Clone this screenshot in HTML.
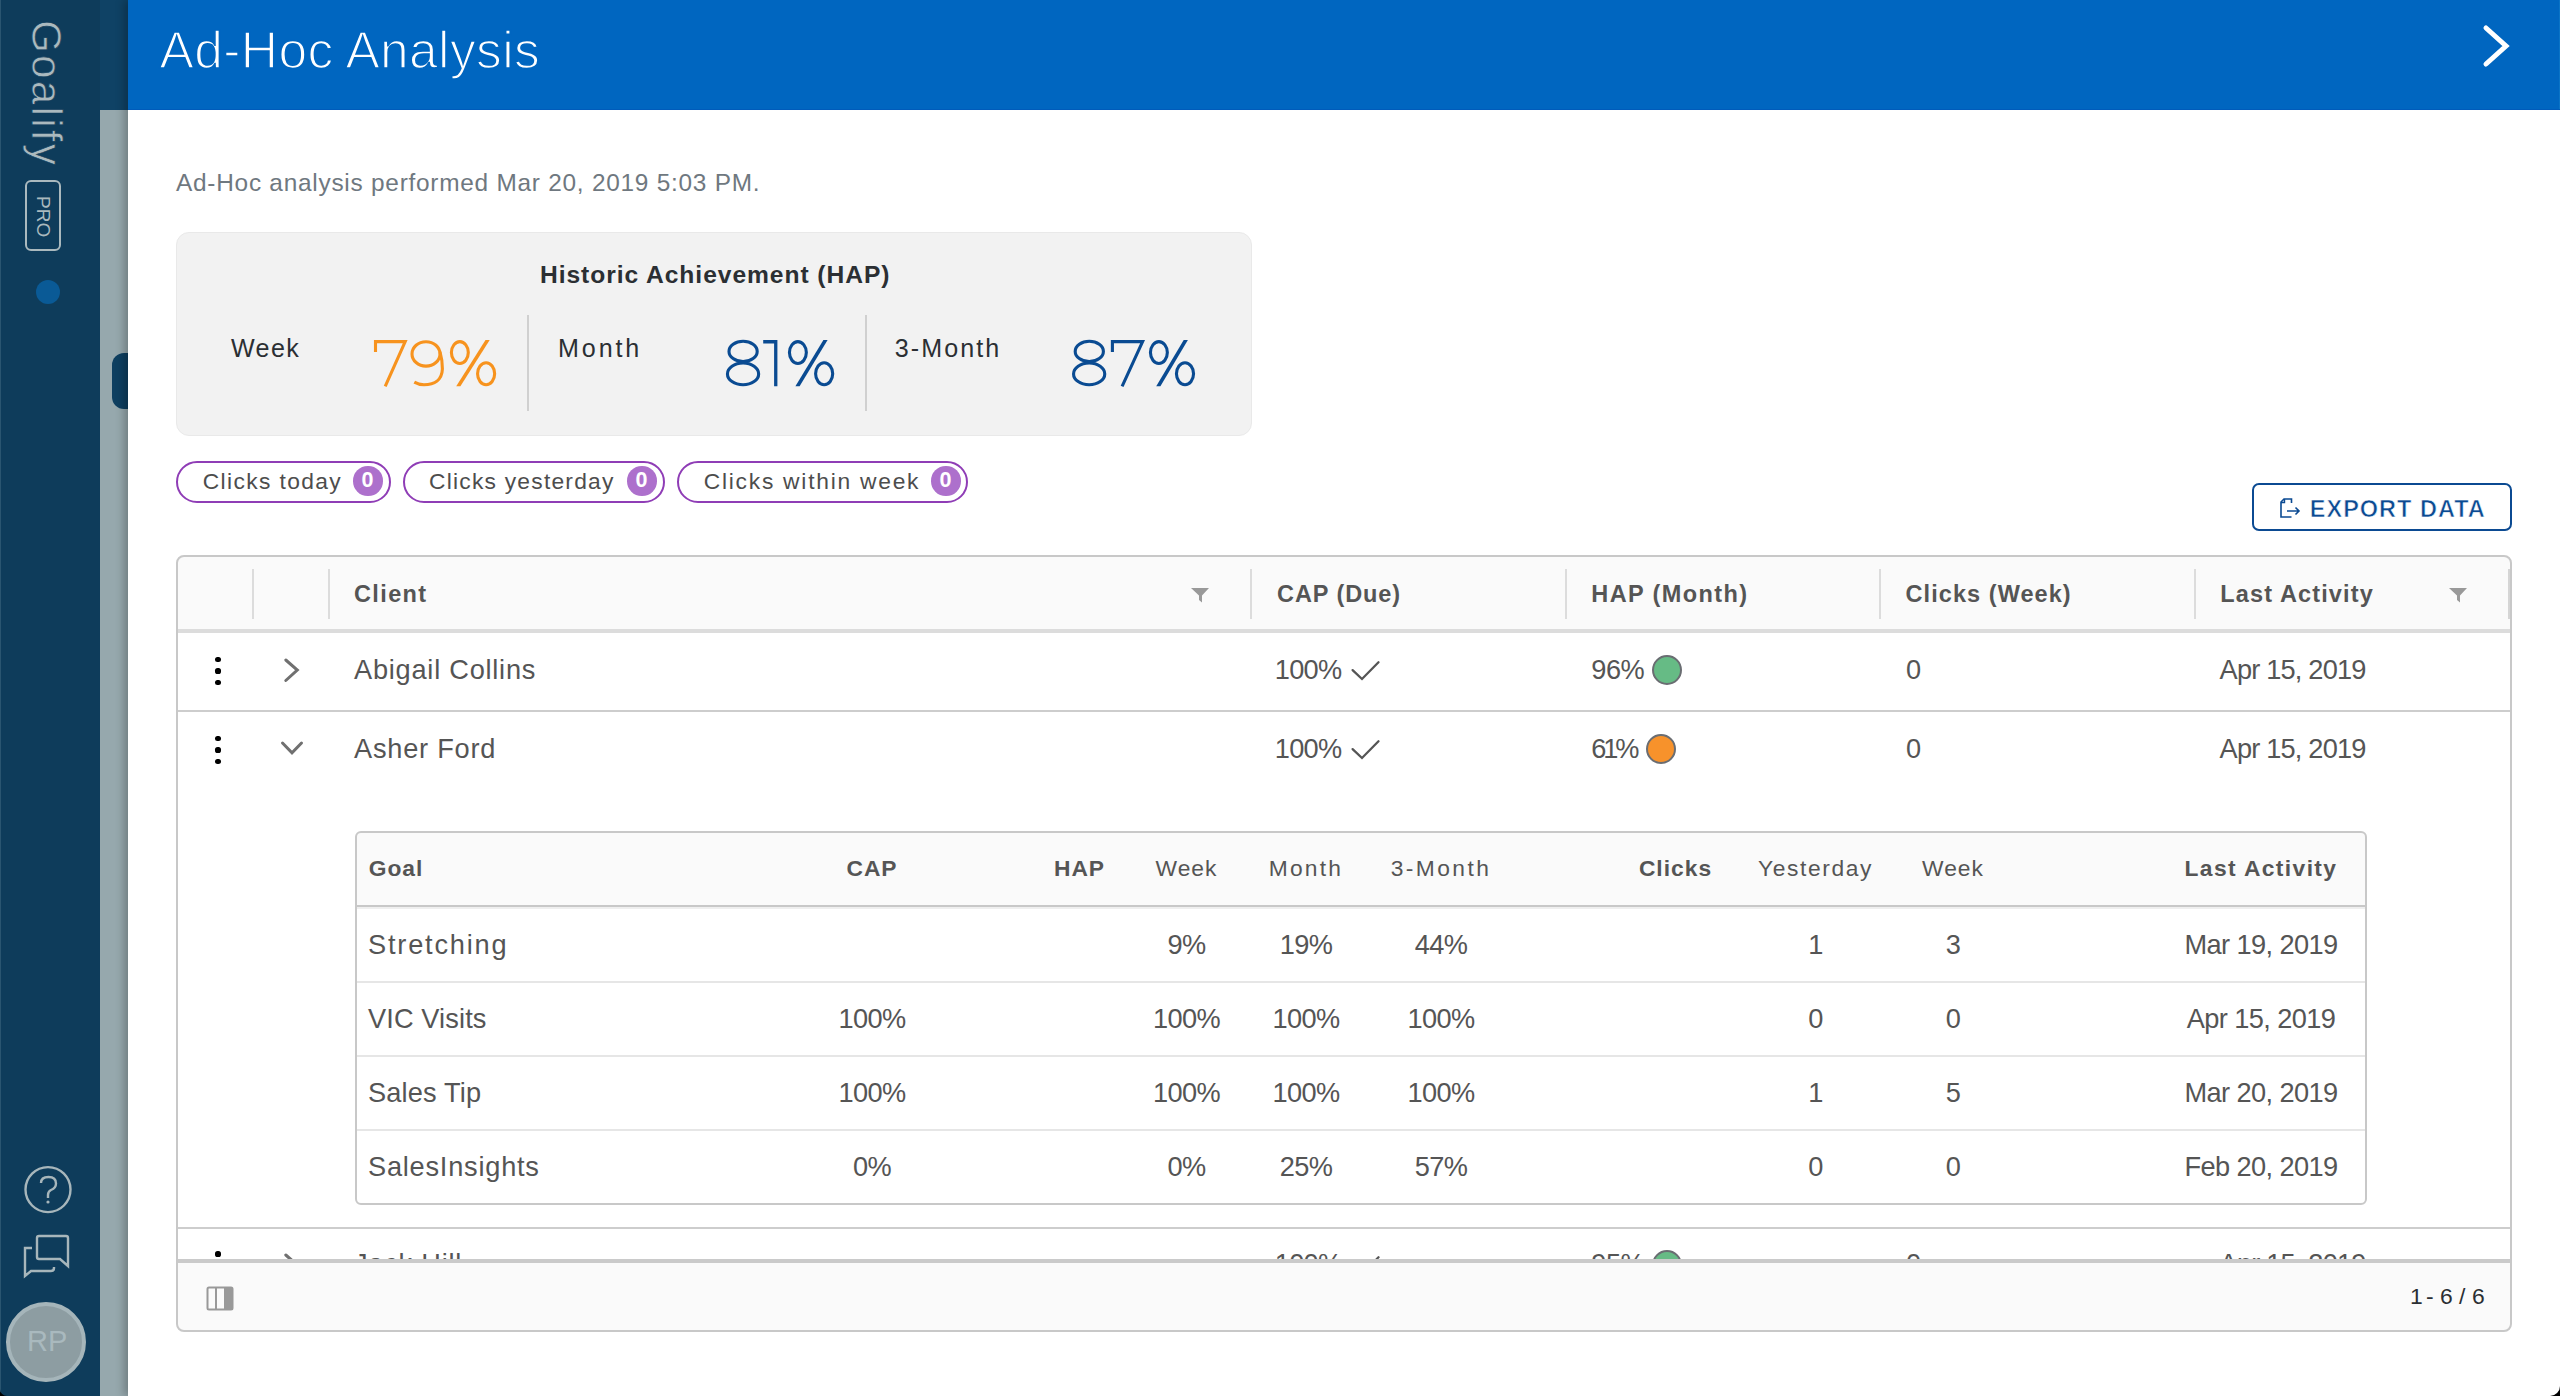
<!DOCTYPE html>
<html><head><meta charset="utf-8">
<style>
*{box-sizing:border-box;margin:0;padding:0}
html,body{width:2560px;height:1396px;overflow:hidden;background:#000}
body{position:relative;font-family:"Liberation Sans",sans-serif}
.t{position:absolute;line-height:1;white-space:nowrap;font-family:"Liberation Sans",sans-serif}
.abs{position:absolute}
#side{position:absolute;left:0;top:0;width:100px;height:1396px;background:#0e3c5b;border-bottom-left-radius:7px;overflow:hidden}
#under{position:absolute;left:100px;top:0;width:40px;height:1396px;background:#96a8ad}
#drawer{position:absolute;left:128px;top:0;width:2432px;height:1396px;background:#fff;border-bottom-right-radius:10px;box-shadow:-4px 0 8px rgba(0,0,0,.25)}
#hdr{position:absolute;left:0;top:0;width:2432px;height:110px;background:#0066c0}
</style></head><body>

<div id="under">
<div class="abs" style="left:0.00px;top:0.00px;width:40.00px;height:110.00px;background:#0f4265"></div>
<div class="abs" style="left:12.00px;top:353.00px;width:40.00px;height:56.00px;background:#0e3f60;border-radius:12px"></div>
</div>
<div id="side">
<div class="abs" style="left:0.00px;top:0.00px;width:1.00px;height:1396.00px;background:#2a5570"></div>
<div class="t" style="left:66.5px;top:20.2px;font-size:42.3px;letter-spacing:2.2px;color:#aab9be;transform:rotate(90deg);transform-origin:0 0;-webkit-text-stroke:0.7px #0e3c5b">Goalify</div>
<div class="abs" style="left:25.00px;top:180.00px;width:36.00px;height:71.00px;border:2px solid #aab9be;border-radius:6px"></div>
<div class="t" style="left:53px;top:196px;font-size:19px;color:#aab9be;transform:rotate(90deg);transform-origin:0 0;letter-spacing:0px">PRO</div>
<div class="abs" style="left:36.00px;top:280.00px;width:24.00px;height:24.00px;border-radius:50%;background:#0a5a96"></div>
<svg class="abs" style="left:0;top:1150px" width="100" height="246" viewBox="0 0 100 246">
    <circle cx="48" cy="39.6" r="22.5" fill="none" stroke="#a7b6bb" stroke-width="2.4"/>
    <path d="M41 33 Q41 27 48.5 27 Q56 27 56 33.5 Q56 38 51 40 Q48 41.5 48 45 L48 48" fill="none" stroke="#a7b6bb" stroke-width="2.4"/>
    <circle cx="48" cy="52" r="1.6" fill="#a7b6bb"/>
    <path d="M32 98 L25 98 L25 126 L31 121 L51 121 Q54 121 54 118 L54 117" fill="none" stroke="#a7b6bb" stroke-width="2.4"/>
    <path d="M39 86 L66 86 Q68 86 68 88 L68 116 L60 109 L39 109 Q37 109 37 107 L37 88 Q37 86 39 86 Z" fill="none" stroke="#a7b6bb" stroke-width="2.4"/>
    <circle cx="46" cy="192" r="38" fill="#8d9da2" stroke="#a5b5ba" stroke-width="4"/>
  </svg>
<div class="t" style="left:27px;top:1327px;font-size:29px;color:#a9b9be">RP</div>
</div>
<div id="drawer">
<div id="hdr">
<div class="abs" style="left:0.00px;top:109.00px;width:2432.00px;height:1.00px;background:#005bba"></div>
<div class="abs" style="left:2431.00px;top:0.00px;width:1.00px;height:109.00px;background:#0b74c6"></div>
<div class="t" style="left:31.60px;top:25.00px;font-size:51.5px;color:#fff;letter-spacing:0.37px;-webkit-text-stroke:1.6px #0066c0;">Ad-Hoc Analysis</div>
<svg class="abs" style="left:2340px;top:0" width="60" height="110"><polyline points="18,28 38,46 18,64" fill="none" stroke="#fff" stroke-width="5" stroke-linecap="round" stroke-linejoin="miter"/></svg>
</div>
<div class="t" style="left:48.00px;top:170.90px;font-size:24.4px;color:#6f7880;letter-spacing:0.75px;">Ad-Hoc analysis performed Mar 20, 2019 5:03 PM.</div>
<div class="abs" style="left:48.00px;top:232.00px;width:1076.00px;height:204.00px;background:#f2f2f2;border:1px solid #e9e9e9;border-radius:13px"></div>
<div class="t" style="left:412.00px;top:263.00px;font-size:24.6px;color:#2b2f33;letter-spacing:0.95px;font-weight:bold;">Historic Achievement (HAP)</div>
<div class="t" style="left:103.00px;top:335.50px;font-size:25.1px;color:#2b2f33;letter-spacing:1.36px;">Week</div>
<svg class="abs" style="left:-128px;top:0" width="1400" height="450" viewBox="0 0 1400 450"><g fill="none" stroke="#f7931e" stroke-width="3.1"><polyline points="375.5,352 375.5,341.65 405.2,341.65 385.2,386.3" stroke-linejoin="miter"/><ellipse cx="426" cy="353.9" rx="14" ry="12.2"/><path d="M440 352 C441.8 358 442.4 363 442.4 369 C442 380 434.5 384.7 424 384.7 C420 384.7 417 383.8 414.3 382.2"/><ellipse cx="459.85" cy="352.55" rx="8.45" ry="10.9"/><ellipse cx="486.1" cy="373.75" rx="8.55" ry="11"/></g><g fill="#f7931e"><polygon points="485.50,340.1 489.70,340.1 460.40,386.3 456.20,386.3"/></g><g fill="none" stroke="#0a4b92" stroke-width="3.1"><ellipse cx="743.1" cy="351.4" rx="14.1" ry="10.1"/><ellipse cx="743.05" cy="373.9" rx="15.6" ry="10.85"/><polyline points="763.2,341.75 775.75,341.75 775.75,386.3" stroke-width="3.3"/><ellipse cx="797.9" cy="352.55" rx="8.45" ry="10.9"/><ellipse cx="824.15" cy="373.75" rx="8.55" ry="11"/><ellipse cx="1089.3" cy="351.4" rx="14.1" ry="10.1"/><ellipse cx="1089.15" cy="373.9" rx="15.6" ry="10.85"/><polyline points="1112.4,352 1112.4,341.65 1142.6,341.65 1122.1,386.3" stroke-linejoin="miter"/><ellipse cx="1158.9" cy="352.55" rx="8.45" ry="10.9"/><ellipse cx="1185" cy="373.75" rx="8.55" ry="11"/></g><g fill="#0a4b92"><polygon points="823.40,340.1 827.60,340.1 799.60,386.3 795.40,386.3"/><polygon points="1183.70,340.1 1187.90,340.1 1160.40,386.3 1156.20,386.3"/></g></svg>
<div class="abs" style="left:399.00px;top:315.00px;width:2.00px;height:96.00px;background:#d0d0d0"></div>
<div class="t" style="left:430.00px;top:335.50px;font-size:25.1px;color:#2b2f33;letter-spacing:2.89px;">Month</div>
<div class="abs" style="left:737.00px;top:315.00px;width:2.00px;height:96.00px;background:#d0d0d0"></div>
<div class="t" style="left:766.80px;top:335.50px;font-size:25.1px;color:#2b2f33;letter-spacing:2.07px;">3-Month</div>
<div class="abs" style="left:48.00px;top:461.00px;width:215.00px;height:42.00px;border:2px solid #8f3db6;border-radius:21px"></div>
<div class="t" style="left:74.75px;top:470.30px;font-size:22.8px;color:#4d4d4d;letter-spacing:1.37px;">Clicks today</div>
<div class="abs" style="left:225.00px;top:466.00px;width:29.50px;height:29.50px;border-radius:50%;background:#ad70cc"></div>
<div class="t" style="left:233.60px;top:469.60px;font-size:21.5px;color:#fff;letter-spacing:0px;font-weight:bold;">0</div>
<div class="abs" style="left:275.00px;top:461.00px;width:262.00px;height:42.00px;border:2px solid #8f3db6;border-radius:21px"></div>
<div class="t" style="left:301.00px;top:470.30px;font-size:22.8px;color:#4d4d4d;letter-spacing:1.23px;">Clicks yesterday</div>
<div class="abs" style="left:499.00px;top:466.00px;width:29.50px;height:29.50px;border-radius:50%;background:#ad70cc"></div>
<div class="t" style="left:507.60px;top:469.60px;font-size:21.5px;color:#fff;letter-spacing:0px;font-weight:bold;">0</div>
<div class="abs" style="left:549.00px;top:461.00px;width:291.00px;height:42.00px;border:2px solid #8f3db6;border-radius:21px"></div>
<div class="t" style="left:575.75px;top:470.30px;font-size:22.8px;color:#4d4d4d;letter-spacing:1.75px;">Clicks within week</div>
<div class="abs" style="left:803.00px;top:466.00px;width:29.50px;height:29.50px;border-radius:50%;background:#ad70cc"></div>
<div class="t" style="left:811.60px;top:469.60px;font-size:21.5px;color:#fff;letter-spacing:0px;font-weight:bold;">0</div>
<div class="abs" style="left:2124.00px;top:483.00px;width:260.00px;height:48.00px;border:2.5px solid #0b4a92;border-radius:7px"></div>
<svg class="abs" style="left:2150px;top:495px" width="30" height="26" viewBox="0 0 30 26">
    <path d="M13.5 8 L13.5 4 L6 4 L3 7 L3 22 L13.5 22" fill="none" stroke="#0b4a92" stroke-width="1.6"/>
    <path d="M3 7.5 L6.5 7.5 L6.5 4" fill="none" stroke="#0b4a92" stroke-width="1.4"/>
    <path d="M9 16 L21 16 M17.5 12.5 L21 16 L17.5 19.5" fill="none" stroke="#0b4a92" stroke-width="1.6"/>
  </svg>
<div class="t" style="left:2181.80px;top:497.80px;font-size:23.5px;color:#0b4a92;letter-spacing:1.0px;font-weight:bold;-webkit-text-stroke:0.6px #fff;">EXPORT DATA</div>
<div class="abs" style="left:48px;top:555px;width:2336px;height:777px;border-radius:8px;overflow:hidden;background:#fff">
<div class="abs" style="left:0.00px;top:0.00px;width:2336.00px;height:74.00px;background:#fafafa"></div>
<div class="abs" style="left:0.00px;top:74.00px;width:2336.00px;height:4.00px;background:#dcdcdc"></div>
<div class="abs" style="left:76.00px;top:14.00px;width:2.00px;height:50.00px;background:#dcdcdc"></div>
<div class="abs" style="left:152.00px;top:14.00px;width:2.00px;height:50.00px;background:#dcdcdc"></div>
<div class="abs" style="left:1074.00px;top:14.00px;width:2.00px;height:50.00px;background:#dcdcdc"></div>
<div class="abs" style="left:1389.00px;top:14.00px;width:2.00px;height:50.00px;background:#dcdcdc"></div>
<div class="abs" style="left:1703.00px;top:14.00px;width:2.00px;height:50.00px;background:#dcdcdc"></div>
<div class="abs" style="left:2018.00px;top:14.00px;width:2.00px;height:50.00px;background:#dcdcdc"></div>
<div class="abs" style="left:2332.00px;top:14.00px;width:3.00px;height:50.00px;background:#d5d5d5"></div>
<div class="t" style="left:178.00px;top:27.74px;font-size:23.5px;color:#555;letter-spacing:1.38px;font-weight:bold;">Client</div>
<div class="t" style="left:1101.00px;top:27.74px;font-size:23.5px;color:#555;letter-spacing:0.92px;font-weight:bold;">CAP (Due)</div>
<div class="t" style="left:1415.30px;top:27.74px;font-size:23.5px;color:#555;letter-spacing:1.4px;font-weight:bold;">HAP (Month)</div>
<div class="t" style="left:1729.60px;top:27.74px;font-size:23.5px;color:#555;letter-spacing:1.06px;font-weight:bold;">Clicks (Week)</div>
<div class="t" style="left:2044.30px;top:27.74px;font-size:23.5px;color:#555;letter-spacing:1.13px;font-weight:bold;">Last Activity</div>
<svg class="abs" style="left:1015.0px;top:32.5px" width="19" height="15" viewBox="0 0 19 15"><path d="M0 0 L18 0 L11 7.5 L11 14.5 L8 12 L8 7.5 Z" fill="#999"/></svg>
<svg class="abs" style="left:2273.0px;top:33.0px" width="19" height="15" viewBox="0 0 19 15"><path d="M0 0 L18 0 L11 7.5 L11 14.5 L8 12 L8 7.5 Z" fill="#999"/></svg>
<div class="abs" style="left:39.40px;top:101.80px;width:5.20px;height:5.20px;border-radius:50%;background:#000"></div>
<div class="abs" style="left:39.40px;top:113.40px;width:5.20px;height:5.20px;border-radius:50%;background:#000"></div>
<div class="abs" style="left:39.40px;top:125.20px;width:5.20px;height:5.20px;border-radius:50%;background:#000"></div>
<svg class="abs" style="left:104px;top:100px" width="24" height="30"><polyline points="5.8,5 17.3,15 5.8,25.5" fill="none" stroke="#707070" stroke-width="3" stroke-linecap="round"/></svg>
<div class="t" style="left:178.00px;top:100.65px;font-size:27.2px;color:#555;letter-spacing:0.76px;">Abigail Collins</div>
<div class="t" style="left:1098.80px;top:100.65px;font-size:27.2px;color:#555;letter-spacing:-0.75px;">100%</div>
<svg class="abs" style="left:1174px;top:103px" width="32" height="24"><polyline points="2.6,12.1 12,21 28.5,4.3" fill="none" stroke="#555" stroke-width="2.3" stroke-linecap="round"/></svg>
<div class="t" style="left:1415.30px;top:100.65px;font-size:27.2px;color:#555;letter-spacing:-0.5px;">96%</div>
<div class="abs" style="left:1476.00px;top:100.00px;width:30.00px;height:30.00px;border-radius:50%;background:#66bb85;border:2px solid #6a6d72"></div>
<div class="t" style="left:1730.00px;top:100.65px;font-size:27.2px;color:#555;letter-spacing:0px;">0</div>
<div class="t" style="left:2043.60px;top:100.65px;font-size:27.2px;color:#555;letter-spacing:-0.81px;">Apr 15, 2019</div>
<div class="abs" style="left:0.00px;top:155.00px;width:2336.00px;height:2.00px;background:#cdcdcd"></div>
<div class="abs" style="left:39.40px;top:180.80px;width:5.20px;height:5.20px;border-radius:50%;background:#000"></div>
<div class="abs" style="left:39.40px;top:192.40px;width:5.20px;height:5.20px;border-radius:50%;background:#000"></div>
<div class="abs" style="left:39.40px;top:204.20px;width:5.20px;height:5.20px;border-radius:50%;background:#000"></div>
<svg class="abs" style="left:100px;top:183px" width="32" height="24"><polyline points="6.5,5 16,14.8 25.5,5" fill="none" stroke="#707070" stroke-width="3" stroke-linecap="round"/></svg>
<div class="t" style="left:178.00px;top:179.65px;font-size:27.2px;color:#555;letter-spacing:0.76px;">Asher Ford</div>
<div class="t" style="left:1098.80px;top:179.65px;font-size:27.2px;color:#555;letter-spacing:-0.75px;">100%</div>
<svg class="abs" style="left:1174px;top:182px" width="32" height="24"><polyline points="2.6,12.1 12,21 28.5,4.3" fill="none" stroke="#555" stroke-width="2.3" stroke-linecap="round"/></svg>
<div class="t" style="left:1415.30px;top:179.65px;font-size:27.2px;color:#555;letter-spacing:-3.2px;">61%</div>
<div class="abs" style="left:1470.00px;top:179.00px;width:30.00px;height:30.00px;border-radius:50%;background:#f7922b;border:2px solid #6a6d72"></div>
<div class="t" style="left:1730.00px;top:179.65px;font-size:27.2px;color:#555;letter-spacing:0px;">0</div>
<div class="t" style="left:2043.60px;top:179.65px;font-size:27.2px;color:#555;letter-spacing:-0.81px;">Apr 15, 2019</div>
<div class="abs" style="left:179px;top:276px;width:2012px;height:374px;border-radius:6px;overflow:hidden;background:#fff">
<div class="abs" style="left:0.00px;top:0.00px;width:2012.00px;height:74.00px;background:#fafafa"></div>
<div class="abs" style="left:0.00px;top:74.00px;width:2012.00px;height:2.00px;background:#c8c8c8"></div>
<div class="abs" style="left:0.00px;top:76.00px;width:2012.00px;height:2.00px;background:#efefef"></div>
<div class="abs" style="left:0.00px;top:150.00px;width:2012.00px;height:2.00px;background:#e6e6e6"></div>
<div class="abs" style="left:0.00px;top:224.00px;width:2012.00px;height:2.00px;background:#e6e6e6"></div>
<div class="abs" style="left:0.00px;top:298.00px;width:2012.00px;height:2.00px;background:#e6e6e6"></div>
<div class="t" style="left:13.70px;top:26.35px;font-size:22.8px;color:#555;font-weight:bold;letter-spacing:1px">Goal</div>
<div class="t" style="left:317.00px;width:400px;text-align:center;top:26.35px;font-size:22.8px;color:#555;letter-spacing:1.0px;font-weight:bold;">CAP</div>
<div class="t" style="left:524.50px;width:400px;text-align:center;top:26.35px;font-size:22.8px;color:#555;letter-spacing:1.0px;font-weight:bold;">HAP</div>
<div class="t" style="left:631.50px;width:400px;text-align:center;top:26.35px;font-size:22.8px;color:#555;letter-spacing:1.0px;">Week</div>
<div class="t" style="left:751.00px;width:400px;text-align:center;top:26.35px;font-size:22.8px;color:#555;letter-spacing:2.25px;">Month</div>
<div class="t" style="left:886.00px;width:400px;text-align:center;top:26.35px;font-size:22.8px;color:#555;letter-spacing:2.43px;">3-Month</div>
<div class="t" style="left:1120.50px;width:400px;text-align:center;top:26.35px;font-size:22.8px;color:#555;letter-spacing:1.0px;font-weight:bold;">Clicks</div>
<div class="t" style="left:1260.50px;width:400px;text-align:center;top:26.35px;font-size:22.8px;color:#555;letter-spacing:1.6px;">Yesterday</div>
<div class="t" style="left:1398.00px;width:400px;text-align:center;top:26.35px;font-size:22.8px;color:#555;letter-spacing:1.0px;">Week</div>
<div class="t" style="left:1706.00px;width:400px;text-align:center;top:26.35px;font-size:22.8px;color:#555;letter-spacing:1.4px;font-weight:bold;">Last Activity</div>
<div class="t" style="left:13.00px;top:99.95px;font-size:27.2px;color:#555;letter-spacing:1.8px">Stretching</div>
<div class="t" style="left:631.50px;width:400px;text-align:center;top:99.95px;font-size:27.2px;color:#555;letter-spacing:-0.6px;">9%</div>
<div class="t" style="left:751.00px;width:400px;text-align:center;top:99.95px;font-size:27.2px;color:#555;letter-spacing:-0.6px;">19%</div>
<div class="t" style="left:886.00px;width:400px;text-align:center;top:99.95px;font-size:27.2px;color:#555;letter-spacing:-0.6px;">44%</div>
<div class="t" style="left:1260.50px;width:400px;text-align:center;top:99.95px;font-size:27.2px;color:#555;letter-spacing:-0.6px;">1</div>
<div class="t" style="left:1398.00px;width:400px;text-align:center;top:99.95px;font-size:27.2px;color:#555;letter-spacing:-0.6px;">3</div>
<div class="t" style="left:1706.00px;width:400px;text-align:center;top:99.95px;font-size:27.2px;color:#555;letter-spacing:-0.6px;">Mar 19, 2019</div>
<div class="t" style="left:13.00px;top:173.95px;font-size:27.2px;color:#555;letter-spacing:0.12px">VIC Visits</div>
<div class="t" style="left:317.00px;width:400px;text-align:center;top:173.95px;font-size:27.2px;color:#555;letter-spacing:-0.6px;">100%</div>
<div class="t" style="left:631.50px;width:400px;text-align:center;top:173.95px;font-size:27.2px;color:#555;letter-spacing:-0.6px;">100%</div>
<div class="t" style="left:751.00px;width:400px;text-align:center;top:173.95px;font-size:27.2px;color:#555;letter-spacing:-0.6px;">100%</div>
<div class="t" style="left:886.00px;width:400px;text-align:center;top:173.95px;font-size:27.2px;color:#555;letter-spacing:-0.6px;">100%</div>
<div class="t" style="left:1260.50px;width:400px;text-align:center;top:173.95px;font-size:27.2px;color:#555;letter-spacing:-0.6px;">0</div>
<div class="t" style="left:1398.00px;width:400px;text-align:center;top:173.95px;font-size:27.2px;color:#555;letter-spacing:-0.6px;">0</div>
<div class="t" style="left:1706.00px;width:400px;text-align:center;top:173.95px;font-size:27.2px;color:#555;letter-spacing:-0.6px;">Apr 15, 2019</div>
<div class="t" style="left:13.00px;top:247.95px;font-size:27.2px;color:#555;letter-spacing:0.15px">Sales Tip</div>
<div class="t" style="left:317.00px;width:400px;text-align:center;top:247.95px;font-size:27.2px;color:#555;letter-spacing:-0.6px;">100%</div>
<div class="t" style="left:631.50px;width:400px;text-align:center;top:247.95px;font-size:27.2px;color:#555;letter-spacing:-0.6px;">100%</div>
<div class="t" style="left:751.00px;width:400px;text-align:center;top:247.95px;font-size:27.2px;color:#555;letter-spacing:-0.6px;">100%</div>
<div class="t" style="left:886.00px;width:400px;text-align:center;top:247.95px;font-size:27.2px;color:#555;letter-spacing:-0.6px;">100%</div>
<div class="t" style="left:1260.50px;width:400px;text-align:center;top:247.95px;font-size:27.2px;color:#555;letter-spacing:-0.6px;">1</div>
<div class="t" style="left:1398.00px;width:400px;text-align:center;top:247.95px;font-size:27.2px;color:#555;letter-spacing:-0.6px;">5</div>
<div class="t" style="left:1706.00px;width:400px;text-align:center;top:247.95px;font-size:27.2px;color:#555;letter-spacing:-0.6px;">Mar 20, 2019</div>
<div class="t" style="left:13.00px;top:321.95px;font-size:27.2px;color:#555;letter-spacing:0.77px">SalesInsights</div>
<div class="t" style="left:317.00px;width:400px;text-align:center;top:321.95px;font-size:27.2px;color:#555;letter-spacing:-0.6px;">0%</div>
<div class="t" style="left:631.50px;width:400px;text-align:center;top:321.95px;font-size:27.2px;color:#555;letter-spacing:-0.6px;">0%</div>
<div class="t" style="left:751.00px;width:400px;text-align:center;top:321.95px;font-size:27.2px;color:#555;letter-spacing:-0.6px;">25%</div>
<div class="t" style="left:886.00px;width:400px;text-align:center;top:321.95px;font-size:27.2px;color:#555;letter-spacing:-0.6px;">57%</div>
<div class="t" style="left:1260.50px;width:400px;text-align:center;top:321.95px;font-size:27.2px;color:#555;letter-spacing:-0.6px;">0</div>
<div class="t" style="left:1398.00px;width:400px;text-align:center;top:321.95px;font-size:27.2px;color:#555;letter-spacing:-0.6px;">0</div>
<div class="t" style="left:1706.00px;width:400px;text-align:center;top:321.95px;font-size:27.2px;color:#555;letter-spacing:-0.6px;">Feb 20, 2019</div>
</div>
<div class="abs" style="left:179px;top:276px;width:2012px;height:374px;border-radius:6px;border:2px solid #c8c8c8"></div>
<div class="abs" style="left:0.00px;top:672.00px;width:2336.00px;height:2.00px;background:#cdcdcd"></div>
<div class="abs" style="left:39.40px;top:696.40px;width:5.20px;height:5.20px;border-radius:50%;background:#000"></div>
<div class="abs" style="left:39.40px;top:708.00px;width:5.20px;height:5.20px;border-radius:50%;background:#000"></div>
<div class="abs" style="left:39.40px;top:719.80px;width:5.20px;height:5.20px;border-radius:50%;background:#000"></div>
<svg class="abs" style="left:104px;top:694.5999999999999px" width="24" height="30"><polyline points="5.8,5 17.3,15 5.8,25.5" fill="none" stroke="#707070" stroke-width="3" stroke-linecap="round"/></svg>
<div class="t" style="left:178.00px;top:695.25px;font-size:27.2px;color:#555;letter-spacing:0.76px;">Jack Hill</div>
<div class="t" style="left:1098.80px;top:695.25px;font-size:27.2px;color:#555;letter-spacing:-0.75px;">100%</div>
<svg class="abs" style="left:1174px;top:697.5999999999999px" width="32" height="24"><polyline points="2.6,12.1 12,21 28.5,4.3" fill="none" stroke="#555" stroke-width="2.3" stroke-linecap="round"/></svg>
<div class="t" style="left:1415.30px;top:695.25px;font-size:27.2px;color:#555;letter-spacing:-0.5px;">95%</div>
<div class="abs" style="left:1476.00px;top:694.60px;width:30.00px;height:30.00px;border-radius:50%;background:#66bb85;border:2px solid #6a6d72"></div>
<div class="t" style="left:1730.00px;top:695.25px;font-size:27.2px;color:#555;letter-spacing:0px;">0</div>
<div class="t" style="left:2043.60px;top:695.25px;font-size:27.2px;color:#555;letter-spacing:-0.81px;">Apr 15, 2019</div>
<div class="abs" style="left:0.00px;top:704.00px;width:2336.00px;height:4.00px;background:#cacaca"></div>
<div class="abs" style="left:0.00px;top:708.00px;width:2336.00px;height:69.00px;background:#fafafa"></div>
<svg class="abs" style="left:30px;top:731px" width="28" height="25" viewBox="0 0 28 25"><rect x="1.5" y="1.5" width="25" height="22" rx="1.5" fill="none" stroke="#999" stroke-width="2"/><line x1="10" y1="1.5" x2="10" y2="23.5" stroke="#999" stroke-width="2"/><rect x="18" y="1.5" width="8.5" height="22" fill="#999"/></svg>
<div class="t" style="left:2234.00px;top:730.34px;font-size:22.9px;color:#2b2f33;letter-spacing:0px;">1</div>
<div class="t" style="left:2250.00px;top:730.34px;font-size:22.9px;color:#2b2f33;letter-spacing:0px;">-</div>
<div class="t" style="left:2264.00px;top:730.34px;font-size:22.9px;color:#2b2f33;letter-spacing:0px;">6</div>
<div class="t" style="left:2283.00px;top:730.34px;font-size:22.9px;color:#2b2f33;letter-spacing:0px;">/</div>
<div class="t" style="left:2296.00px;top:730.34px;font-size:22.9px;color:#2b2f33;letter-spacing:0px;">6</div>
</div>
<div class="abs" style="left:48px;top:555px;width:2336px;height:777px;border-radius:8px;border:2px solid #c8c8c8"></div>
</div>
</body></html>
